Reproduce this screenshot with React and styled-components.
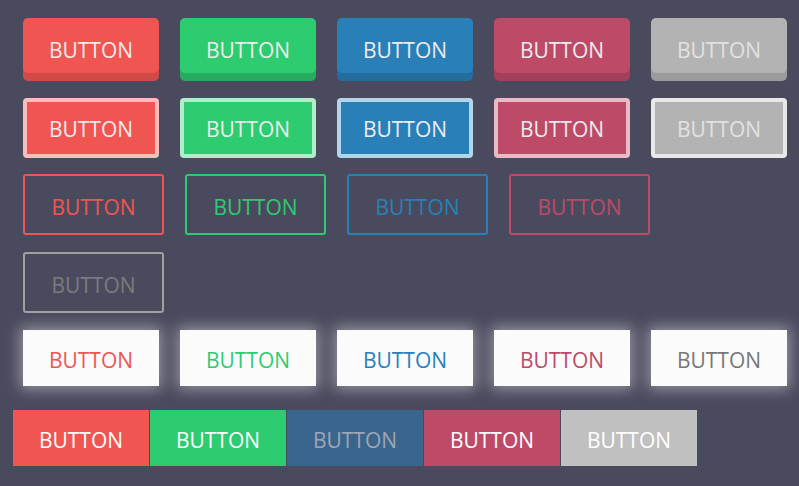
import React from "react";
import styled, { createGlobalStyle } from "styled-components";

const GlobalStyle = createGlobalStyle`
  body {
    margin: 0;
    background: #4a4a5e;
    font-family: "Open Sans", "Liberation Sans", sans-serif;
  }
`;

const palette = {
  red: { base: "#f05552", dark: "#d14a47", light: "#fbbdbc" },
  green: { base: "#2ecc71", dark: "#29ab5f", light: "#b3ecca" },
  blue: { base: "#2980b9", dark: "#246d9f", light: "#b2d5ea" },
  pink: { base: "#bd4a67", dark: "#a23f59", light: "#eabac6" },
  grey: { base: "#b3b3b3", dark: "#9b9b9b", light: "#e8e8e8" }
};

const outlineColors = [
  { border: "#f05552", text: "#f05552" },
  { border: "#2ecc71", text: "#2ecc71" },
  { border: "#2980b9", text: "#2980b9" },
  { border: "#bd4a67", text: "#bd4a67" },
  { border: "#a0a0a0", text: "#7b7b7b" }
];

const glowColors = ["#f05552", "#2ecc71", "#2980b9", "#bd4a67", "#777777"];

const groupColors = [
  { bg: "#f05552", text: "#ffffff" },
  { bg: "#2ecc71", text: "#ffffff" },
  { bg: "#3a658c", text: "#9fa6b6" },
  { bg: "#be4a68", text: "#ffffff" },
  { bg: "#c0c0c0", text: "#ffffff" }
];

const Page = styled.div`
  padding: 18px 0 0 23px;
  width: 799px;
  box-sizing: border-box;
`;

const Row = styled.div`
  display: flex;
  flex-wrap: wrap;
  column-gap: 21px;
  row-gap: 17px;
  margin-bottom: ${p => p.$after || 0}px;
`;

const BaseButton = styled.button`
  box-sizing: border-box;
  display: flex;
  align-items: center;
  justify-content: center;
  flex-shrink: 0;
  margin: 0;
  padding: 0;
  border: none;
  font-family: inherit;
  font-size: 21px;
  text-transform: uppercase;
  cursor: pointer;
`;

const RaisedButton = styled(BaseButton)`
  width: 136px;
  height: 55px;
  padding-top: 9px;
  border-radius: 5px;
  background: ${p => p.$c.base};
  color: ${p => (p.$c === palette.grey ? "#e2e2e2" : "#ececec")};
  box-shadow: 0 8px 0 ${p => p.$c.dark};
`;

const FramedButton = styled(BaseButton)`
  width: 136px;
  height: 60px;
  padding-top: 1px;
  border-radius: 4px;
  border: 4px solid ${p => p.$c.light};
  background: ${p => p.$c.base};
  color: ${p => (p.$c === palette.grey ? "#e2e2e2" : "#ececec")};
`;

const OutlineButton = styled(BaseButton)`
  width: 141px;
  height: 61px;
  padding-top: 4px;
  border-radius: 3px;
  border: 2px solid ${p => p.$border};
  background: transparent;
  color: ${p => p.$text};
`;

const GlowButton = styled(BaseButton)`
  width: 136px;
  height: 56px;
  padding-top: 3px;
  background: #fbfbfc;
  color: ${p => p.$text};
  box-shadow: 0 0 14px 3px rgba(255, 255, 255, 0.42);
`;

const Group = styled.div`
  display: flex;
  gap: 1px;
  margin-left: -10px;
`;

const GroupButton = styled(BaseButton)`
  width: 136px;
  height: 56px;
  padding-top: 3px;
  background: ${p => p.$bg};
  color: ${p => p.$text};
`;

const colors = Object.values(palette);

export default function App() {
  return (
    <Page>
      <GlobalStyle />
      <Row $after={25}>
        {colors.map((c, i) => (
          <RaisedButton key={i} $c={c}>Button</RaisedButton>
        ))}
      </Row>
      <Row $after={16}>
        {colors.map((c, i) => (
          <FramedButton key={i} $c={c}>Button</FramedButton>
        ))}
      </Row>
      <Row $after={17}>
        {outlineColors.map((c, i) => (
          <OutlineButton key={i} $border={c.border} $text={c.text}>
            Button
          </OutlineButton>
        ))}
      </Row>
      <Row $after={24}>
        {glowColors.map((c, i) => (
          <GlowButton key={i} $text={c}>Button</GlowButton>
        ))}
      </Row>
      <Group>
        {groupColors.map((c, i) => (
          <GroupButton key={i} $bg={c.bg} $text={c.text}>
            Button
          </GroupButton>
        ))}
      </Group>
    </Page>
  );
}
